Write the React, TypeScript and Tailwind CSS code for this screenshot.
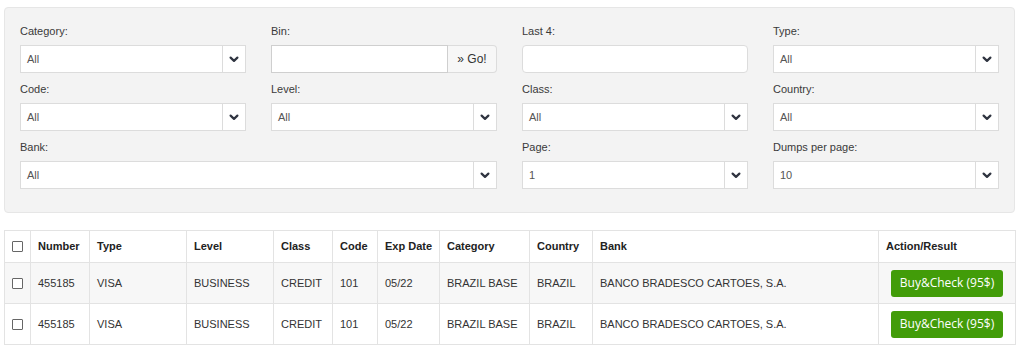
import { useState } from 'react';

const font = { fontFamily: '"Liberation Sans", Arial, sans-serif' };

function Chevron() {
  return (
    <svg width="10" height="7" viewBox="0 0 10 7" className="block">
      <path d="M1.6 1.6 L5 4.9 L8.4 1.6" fill="none" stroke="#2f3440" strokeWidth="2.2" strokeLinecap="round" strokeLinejoin="round" />
    </svg>
  );
}

function SelectBox({ value }: { value: string }) {
  return (
    <div className="flex h-[28px] border border-[#dcdcdc] bg-white">
      <div className="flex-1 flex items-center pl-[6px] text-[11px] text-[#555]">{value}</div>
      <div className="w-[23px] border-l border-[#dcdcdc] flex items-center justify-center">
        <Chevron />
      </div>
    </div>
  );
}

function Field({ label, children, span }: { label: string; children: React.ReactNode; span?: boolean }) {
  return (
    <div className={span ? 'col-span-2' : ''}>
      <div className="h-[14px] mb-[7px] text-[11px] leading-[14px] text-[#3a3a3a]">{label}</div>
      {children}
    </div>
  );
}

const rows = [
  { number: '455185', type: 'VISA', level: 'BUSINESS', cls: 'CREDIT', code: '101', exp: '05/22', category: 'BRAZIL BASE', country: 'BRAZIL', bank: 'BANCO BRADESCO CARTOES, S.A.' },
  { number: '455185', type: 'VISA', level: 'BUSINESS', cls: 'CREDIT', code: '101', exp: '05/22', category: 'BRAZIL BASE', country: 'BRAZIL', bank: 'BANCO BRADESCO CARTOES, S.A.' },
];

function Check() {
  return <span className="block w-[11px] h-[11px] border border-[#666] bg-white rounded-[1px]" />;
}

export default function App() {
  const [bin, setBin] = useState('');
  const [last4, setLast4] = useState('');

  return (
    <div className="w-[1024px] h-[347px] overflow-hidden bg-white" style={font}>
      <div className="ml-[4px] mt-[7px] w-[1011px] border border-[#e6e6e6] rounded-[4px] bg-[#f3f3f3] pt-[16px] px-[15px] pb-[23px]">
        <div className="grid grid-cols-4 gap-x-[25px] gap-y-[9px]">
          <Field label="Category:"><SelectBox value="All" /></Field>
          <Field label="Bin:">
            <div className="flex h-[28px]">
              <input
                value={bin}
                onChange={(e) => setBin(e.target.value)}
                className="flex-1 min-w-0 border border-[#cfcfcf] bg-white outline-none px-[6px] text-[11px]"
              />
              <button className="w-[49px] border border-l-0 border-[#dcdcdc] rounded-r-[4px] bg-[#f7f7f7] text-[12px] text-[#333] flex items-center justify-center">
                » Go!
              </button>
            </div>
          </Field>
          <Field label="Last 4:">
            <input
              value={last4}
              onChange={(e) => setLast4(e.target.value)}
              className="block w-full h-[28px] border border-[#dcdcdc] rounded-[4px] bg-white outline-none px-[6px] text-[11px]"
            />
          </Field>
          <Field label="Type:"><SelectBox value="All" /></Field>
          <Field label="Code:"><SelectBox value="All" /></Field>
          <Field label="Level:"><SelectBox value="All" /></Field>
          <Field label="Class:"><SelectBox value="All" /></Field>
          <Field label="Country:"><SelectBox value="All" /></Field>
          <Field label="Bank:" span><SelectBox value="All" /></Field>
          <Field label="Page:"><SelectBox value="1" /></Field>
          <Field label="Dumps per page:"><SelectBox value="10" /></Field>
        </div>
      </div>

      <table className="mt-[17px] ml-[4px] w-[1011px] table-fixed border-collapse text-[11px] text-[#333]">
        <colgroup>
          <col className="w-[26px]" />
          <col className="w-[59px]" />
          <col className="w-[97px]" />
          <col className="w-[87px]" />
          <col className="w-[59px]" />
          <col className="w-[45px]" />
          <col className="w-[62px]" />
          <col className="w-[90px]" />
          <col className="w-[63px]" />
          <col className="w-[286px]" />
          <col className="w-[137px]" />
        </colgroup>
        <thead>
          <tr className="h-[32px] bg-white">
            <th className="border border-[#e3e3e3] px-[7px]"><Check /></th>
            {['Number', 'Type', 'Level', 'Class', 'Code', 'Exp Date', 'Category', 'Country', 'Bank', 'Action/Result'].map((h) => (
              <th key={h} className="border border-[#e3e3e3] px-[7px] text-left font-bold text-[#222] whitespace-nowrap">{h}</th>
            ))}
          </tr>
        </thead>
        <tbody>
          {rows.map((r, i) => (
            <tr key={i} className={i % 2 === 0 ? 'h-[41px] bg-[#f7f7f7]' : 'h-[41px] bg-white'}>
              <td className="border border-[#e3e3e3] px-[7px]"><Check /></td>
              <td className="border border-[#e3e3e3] px-[7px]">{r.number}</td>
              <td className="border border-[#e3e3e3] px-[7px]">{r.type}</td>
              <td className="border border-[#e3e3e3] px-[7px]">{r.level}</td>
              <td className="border border-[#e3e3e3] px-[7px]">{r.cls}</td>
              <td className="border border-[#e3e3e3] px-[7px]">{r.code}</td>
              <td className="border border-[#e3e3e3] px-[7px]">{r.exp}</td>
              <td className="border border-[#e3e3e3] px-[7px] whitespace-nowrap">{r.category}</td>
              <td className="border border-[#e3e3e3] px-[7px]">{r.country}</td>
              <td className="border border-[#e3e3e3] px-[7px] whitespace-nowrap">{r.bank}</td>
              <td className="border border-[#e3e3e3] px-[12px]">
                <button
                  className="w-full h-[27px] rounded-[3px] bg-[#429c09] text-white text-[12px]"
                  style={{ fontFamily: '"Open Sans", sans-serif' }}
                >
                  Buy&amp;Check (95$)
                </button>
              </td>
            </tr>
          ))}
        </tbody>
      </table>
    </div>
  );
}
